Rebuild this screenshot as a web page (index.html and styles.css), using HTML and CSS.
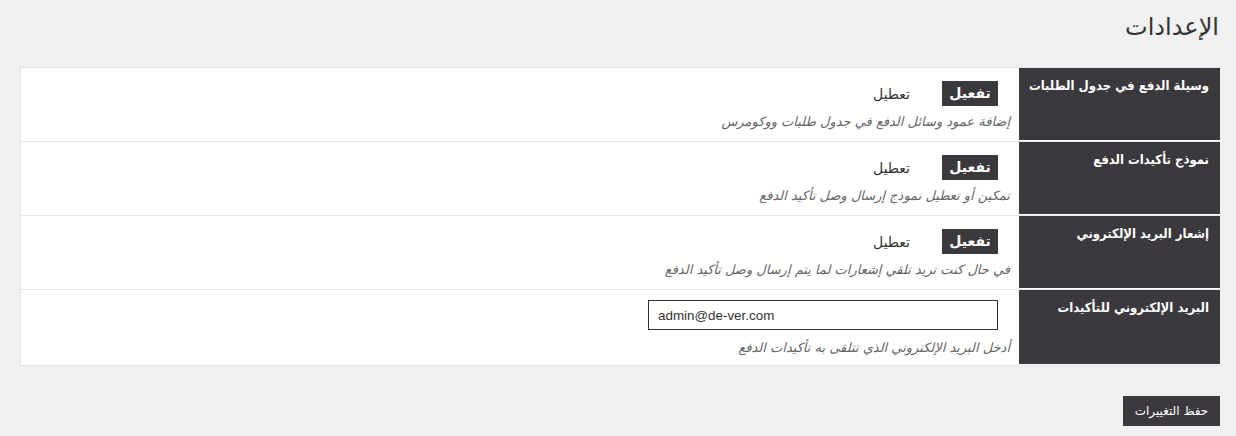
FILE: index.html
```html
<!DOCTYPE html>
<html lang="ar" dir="rtl">
<head>
<meta charset="utf-8">
<title>الإعدادات</title>
<link rel="stylesheet" href="styles.css">
</head>
<body>
<div class="wrap">
  <h1 class="title">الإعدادات</h1>
  <div class="table">
    <div class="row">
      <div class="label">وسيلة الدفع في جدول الطلبات</div>
      <div class="field">
        <div class="toggle"><span class="btn-on">تفعيل</span><span class="off">تعطيل</span></div>
        <p class="desc">إضافة عمود وسائل الدفع في جدول طلبات ووكومرس</p>
      </div>
    </div>
    <div class="row">
      <div class="label">نموذج تأكيدات الدفع</div>
      <div class="field">
        <div class="toggle"><span class="btn-on">تفعيل</span><span class="off">تعطيل</span></div>
        <p class="desc">تمكين أو تعطيل نموذج إرسال وصل تأكيد الدفع</p>
      </div>
    </div>
    <div class="row">
      <div class="label">إشعار البريد الإلكتروني</div>
      <div class="field">
        <div class="toggle"><span class="btn-on">تفعيل</span><span class="off">تعطيل</span></div>
        <p class="desc">في حال كنت تريد تلقي إشعارات لما يتم إرسال وصل تأكيد الدفع</p>
      </div>
    </div>
    <div class="row last">
      <div class="label">البريد الإلكتروني للتأكيدات</div>
      <div class="field">
        <input class="email" type="text" value="admin@de-ver.com" dir="ltr">
        <p class="desc desc-email">أدخل البريد الإلكتروني الذي تتلقى به تأكيدات الدفع</p>
      </div>
    </div>
  </div>
  <div class="actions"><button class="save" type="button">حفظ التغييرات</button></div>
</div>
</body>
</html>
```

FILE: styles.css
```css
html, body {
  margin: 0;
  padding: 0;
  background: #f0f0f0;
}
body {
  font-family: "DejaVu Sans", "Noto Sans", sans-serif;
  color: #333;
}
.wrap {
  padding: 0 16px 0 20px;
}
.title {
  margin: 0;
  padding: 12px 1px 0 0;
  height: 67px;
  box-sizing: border-box;
  font-size: 24px;
  font-weight: normal;
  color: #333;
  line-height: 30px;
}
.table {
  background: #fff;
  border: 1px solid #e2e2e2;
  border-right: none;
}
.row {
  display: flex;
  height: 74px;
  border-bottom: 1px solid #e5e5e5;
  box-sizing: border-box;
}
.row.last {
  height: 75px;
  border-bottom: none;
}
.label {
  width: 201px;
  flex: none;
  background: #3b393d;
  color: #fff;
  font-family: "DejaVu Sans Condensed", "DejaVu Sans", sans-serif;
  font-stretch: condensed;
  font-weight: bold;
  font-size: 13px;
  white-space: nowrap;
  padding: 8px 11px 0 0;
  box-sizing: border-box;
  line-height: 20px;
  box-shadow: 0 -1px 0 #fff inset;
}
.field {
  flex: 1;
  padding: 13px 21px 0 0;
}
.toggle {
  display: flex;
  align-items: center;
  height: 25px;
}
.btn-on {
  display: inline-block;
  width: 56px;
  height: 25px;
  line-height: 25px;
  text-align: center;
  background: #3b393d;
  color: #fff;
  font-weight: bold;
  font-size: 14px;
}
.off {
  margin-right: 32px;
  font-size: 14px;
  color: #333;
}
.desc {
  margin: 7px -12px 0 0;
  font-size: 13px;
  font-style: italic;
  color: #666;
  line-height: 18px;
}
.email {
  display: block;
  width: 350px;
  height: 30px;
  box-sizing: border-box;
  border: 1px solid #333;
  margin: -3px 0 0 0;
  padding: 0 9px;
  font-family: "Liberation Sans", Arial, sans-serif;
  font-size: 13.4px;
  color: #333;
  background: #fff;
  outline: none;
}
.desc-email {
  margin-top: 9px;
}
.actions {
  padding-top: 30px;
  display: flex;
}
.save {
  width: 97px;
  height: 30px;
  border: none;
  background: #3b393d;
  color: #fff;
  font-family: "DejaVu Sans", sans-serif;
  font-size: 12px;
  padding: 0;
  cursor: pointer;
}
```
